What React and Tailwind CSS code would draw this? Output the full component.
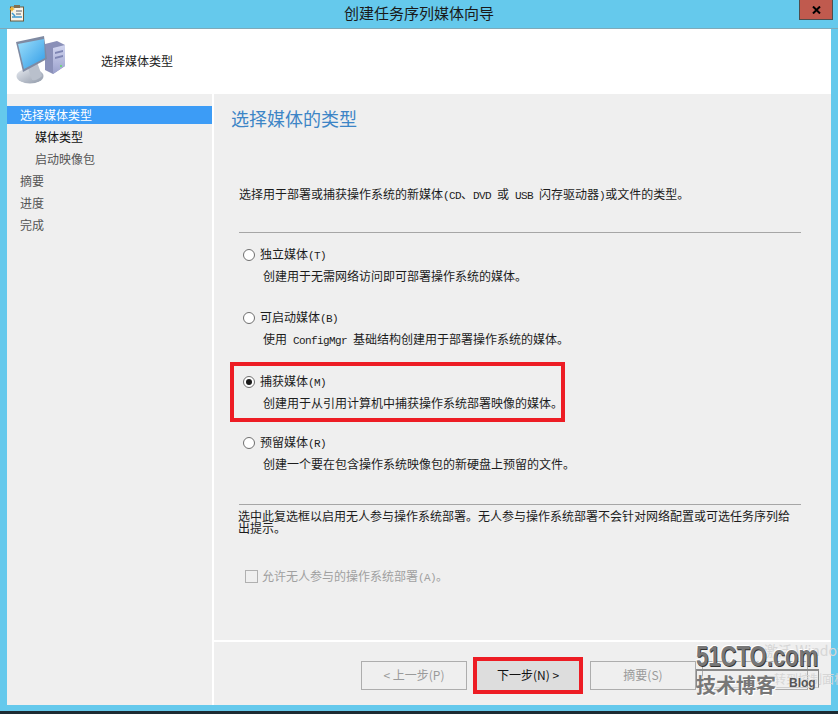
const cjk = { fontFamily: '"Noto Sans CJK SC", sans-serif' };
const latin = { fontFamily: '"Liberation Sans", sans-serif' };

function PcIcon() {
  return (
    <svg width="52" height="52" viewBox="0 0 52 52">
      <defs>
        <linearGradient id="base" x1="0" y1="0" x2="1" y2="1">
          <stop offset="0" stopColor="#e6eaf0" />
          <stop offset="1" stopColor="#8f98a8" />
        </linearGradient>
        <linearGradient id="screen" x1="0" y1="0" x2="1" y2="1">
          <stop offset="0" stopColor="#9fe0fb" />
          <stop offset="1" stopColor="#2f9be6" />
        </linearGradient>
        <linearGradient id="tower" x1="0" y1="0" x2="0" y2="1">
          <stop offset="0" stopColor="#d2d6f0" />
          <stop offset="1" stopColor="#9aa0cc" />
        </linearGradient>
      </defs>
      <path d="M30 9 L42 6 L50 10 L50 31 L38 39 L30 35 Z" fill="#8a90b8" />
      <path d="M38 13 L50 10 L50 31 L38 39 Z" fill="url(#tower)" />
      <path d="M40 17 L48 15 V17 L40 19 Z M40 22 L48 20 V22 L40 24 Z" fill="#7f86b4" />
      <circle cx="46" cy="31" r="1" fill="#5fdc6a" />
      <ellipse cx="15" cy="41" rx="13.5" ry="7.5" fill="url(#base)" />
      <path d="M12 30 L22 27 L27 41 Q22 46 17 45 Z" fill="#b9c0cc" />
      <path d="M1 7 L29 1 L32 24 L8 37 Z" fill="#7f8aa2" />
      <path d="M3 9 L29 4 L30 23 L9 34 Z" fill="url(#screen)" />
    </svg>
  );
}

function WizardIcon() {
  return (
    <svg width="16" height="18" viewBox="0 0 16 18">
      <rect x="1.5" y="3" width="13" height="14" fill="#f6f3e8" stroke="#6e5a3a" />
      <rect x="5" y="1" width="6" height="3" fill="#7f6f50" />
      <path d="M7 7 H13 M7 10 H12" stroke="#54606e" />
      <path d="M3 9 L6 12 M3 13 H13" stroke="#3f9ad0" strokeWidth="1.5" />
      <path d="M3 2 L4 4 L6 5 L4 6 L3 8 L2 6 L0 5 L2 4 Z" fill="#f2b632" />
    </svg>
  );
}

// the dialog's body font has thin latin letters on a 6px pitch
function L({ children }) {
  return <span className="text-[11px] tracking-[-0.6px] whitespace-pre" style={{ fontFamily: '"Liberation Mono", monospace' }}>{children}</span>;
}

function Radio({ checked }) {
  return (
    <span className="w-[12px] h-[12px] rounded-full border border-[#6f6f6f] bg-white flex items-center justify-center shrink-0">
      {checked && <span className="w-[6px] h-[6px] rounded-full bg-[#1a1a1a]" />}
    </span>
  );
}

function MediaOption({ label, desc, checked }) {
  return (
    <div>
      <div className="flex items-center gap-[5px] h-[20px] text-[12px] text-[#1c1c1c]">
        <Radio checked={checked} />
        <span>{label}</span>
      </div>
      <p className="ml-[20px] mt-[1px] h-[20px] leading-[20px] text-[12px] text-[#1c1c1c] whitespace-nowrap">{desc}</p>
    </div>
  );
}

function NavItem({ children, sub, kind }) {
  const look = {
    active: 'h-[18px] leading-[18px] mb-[2px] bg-[#3c9cf6] text-white',
    current: 'h-[22px] leading-[22px] text-[#111]',
    idle: 'h-[22px] leading-[22px] text-[#555]',
  };
  return <div className={'text-[12px] ' + (sub ? 'pl-[28px] ' : 'pl-[13px] ') + look[kind]}>{children}</div>;
}

function WizardButton({ children }) {
  return (
    <div className="w-[106px] h-[29px] flex items-center justify-center text-[12px] border border-[#adadad] text-[#9a9a9a]">
      {children}
    </div>
  );
}

export default function App() {
  return (
    <div className="w-[838px] h-[714px] overflow-hidden relative bg-[#65c9ec] flex flex-col" style={cjk}>
      <div className="h-[29px] shrink-0 relative flex items-center justify-center pb-[2px] text-[15px] text-[#1a1a1a] border-b border-[#7fa9b8]">
        <span className="absolute left-[9px] top-[4px]"><WizardIcon /></span>
        创建任务序列媒体向导
        <span className="absolute right-[5px] top-0 w-[34px] h-[20px] bg-[#c05a4e] border border-[#4d4d4d] border-t-0 flex items-center justify-center">
          <svg width="9" height="8" viewBox="0 0 9 8">
            <path d="M1 0.5 L8 7.5 M8 0.5 L1 7.5" stroke="#000" strokeWidth="2" />
          </svg>
        </span>
      </div>

      <div className="mx-[7px] h-[676px] shrink-0 flex flex-col">
        <div className="h-[65px] shrink-0 bg-white flex items-center">
          <span className="ml-[8px] mt-[-1px]"><PcIcon /></span>
          <span className="ml-[34px] mt-[-2px] text-[12px] text-[#222]">选择媒体类型</span>
        </div>

        <div className="flex-1 flex min-h-0 bg-[#efefef]">
          <div className="w-[205px] shrink-0 pt-[12px]">
            <NavItem kind="active">选择媒体类型</NavItem>
            <NavItem sub kind="current">媒体类型</NavItem>
            <NavItem sub kind="idle">启动映像包</NavItem>
            <NavItem kind="idle">摘要</NavItem>
            <NavItem kind="idle">进度</NavItem>
            <NavItem kind="idle">完成</NavItem>
          </div>

          <div className="flex-1 border-l-2 border-white flex flex-col min-w-0">
            <div className="h-[548px] shrink-0 border-b-2 border-white pl-[18px]">
              <h1 className="mt-[11px] -ml-[1px] h-[26px] leading-[26px] text-[18px] font-normal text-[#3d85c6]">选择媒体的类型</h1>
              <p className="mt-[53px] ml-[7px] h-[20px] leading-[20px] text-[12px] text-[#1c1c1c] whitespace-nowrap">
                选择用于部署或捕获操作系统的新媒体<L>(CD</L>、<L>DVD </L>或<L> USB </L>闪存驱动器<L>)</L>或文件的类型。
              </p>
              <div className="mt-[28px] ml-[7px] w-[562px] border-t border-[#a6a6a6]" />

              <div className="mt-[12px] ml-[11px]">
                <MediaOption label={<>独立媒体<L>(T)</L></>} desc="创建用于无需网络访问即可部署操作系统的媒体。" />
              </div>
              <div className="mt-[22px] ml-[11px]">
                <MediaOption label={<>可启动媒体<L>(B)</L></>} desc={<>使用<L> ConfigMgr </L>基础结构创建用于部署操作系统的媒体。</>} />
              </div>
              <div className="mt-[13px] -ml-[2px] w-[335px] h-[60px] border-4 border-[#ed1c24] pl-[9px] pt-[6px]">
                <MediaOption checked label={<>捕获媒体<L>(M)</L></>} desc="创建用于从引用计算机中捕获操作系统部署映像的媒体。" />
              </div>
              <div className="mt-[11px] ml-[11px]">
                <MediaOption label={<>预留媒体<L>(R)</L></>} desc="创建一个要在包含操作系统映像包的新硬盘上预留的文件。" />
              </div>

              <div className="mt-[30px] ml-[7px] w-[562px] border-t border-[#a6a6a6]" />
              <p className="ml-[6px] whitespace-nowrap text-[12px] leading-[12px] mt-[5px] text-[#1c1c1c]">
                选中此复选框以启用无人参与操作系统部署。无人参与操作系统部署不会针对网络配置或可选任务序列给
                <br />
                出提示。
              </p>
              <div className="mt-[33px] ml-[13px] flex items-center gap-[4px] text-[12px] text-[#a0a0a0]">
                <span className="w-[13px] h-[13px] border border-[#b0b0b0] shrink-0" />
                <span>允许无人参与的操作系统部署<L>(A)</L>。</span>
              </div>
            </div>

            <div className="flex-1 flex items-center pl-[147px] pt-[3px] gap-[6px]">
              <WizardButton>&lt; 上一步(P)</WizardButton>
              <div className="border-4 border-[#ed1c24] mr-[1px]">
                <div className="w-[102px] h-[29px] bg-[#dddddd] flex items-center justify-center text-[12px] text-[#111]">下一步(N) &gt;</div>
              </div>
              <WizardButton>摘要(S)</WizardButton>
              <WizardButton />
            </div>
          </div>
        </div>
      </div>

      <div className="mt-auto h-[3px] bg-[#1d2b33] shrink-0" />

      {/* faint activation notice under the blog watermark */}
      <span className="absolute left-[764px] top-[640px] text-[14px] text-[#d6d6d6] whitespace-nowrap pointer-events-none">激活 Windows</span>
      <span className="absolute left-[774px] top-[670px] text-[12px] text-[#d6d6d6] whitespace-nowrap pointer-events-none">转到控制面板</span>

      {/* 51CTO watermark */}
      <div className="absolute left-[696px] top-[640px] w-[124px] h-[60px] pointer-events-none">
        <span className="absolute left-0 top-0 origin-left scale-x-[0.76] text-[29px] leading-[32px] font-bold text-[#777] whitespace-nowrap [text-shadow:1px_1px_0_#333,-1px_-1px_0_#fff]" style={latin}>51CTO.com</span>
        <div className="absolute left-0 top-[29px] w-[123px] h-[19px] border-t-2 border-l border-r border-b border-[#8a8a8a] border-b-[#cfcfcf]" />
        <span className="absolute left-0 top-[33px] text-[20px] leading-[24px] font-bold text-[#777] whitespace-nowrap [text-shadow:1px_1px_0_#fff]">技术博客</span>
        <span className="absolute left-[93px] top-[35px] text-[12px] leading-[16px] font-bold text-[#555] whitespace-nowrap" style={latin}>Blog</span>
      </div>
    </div>
  );
}
